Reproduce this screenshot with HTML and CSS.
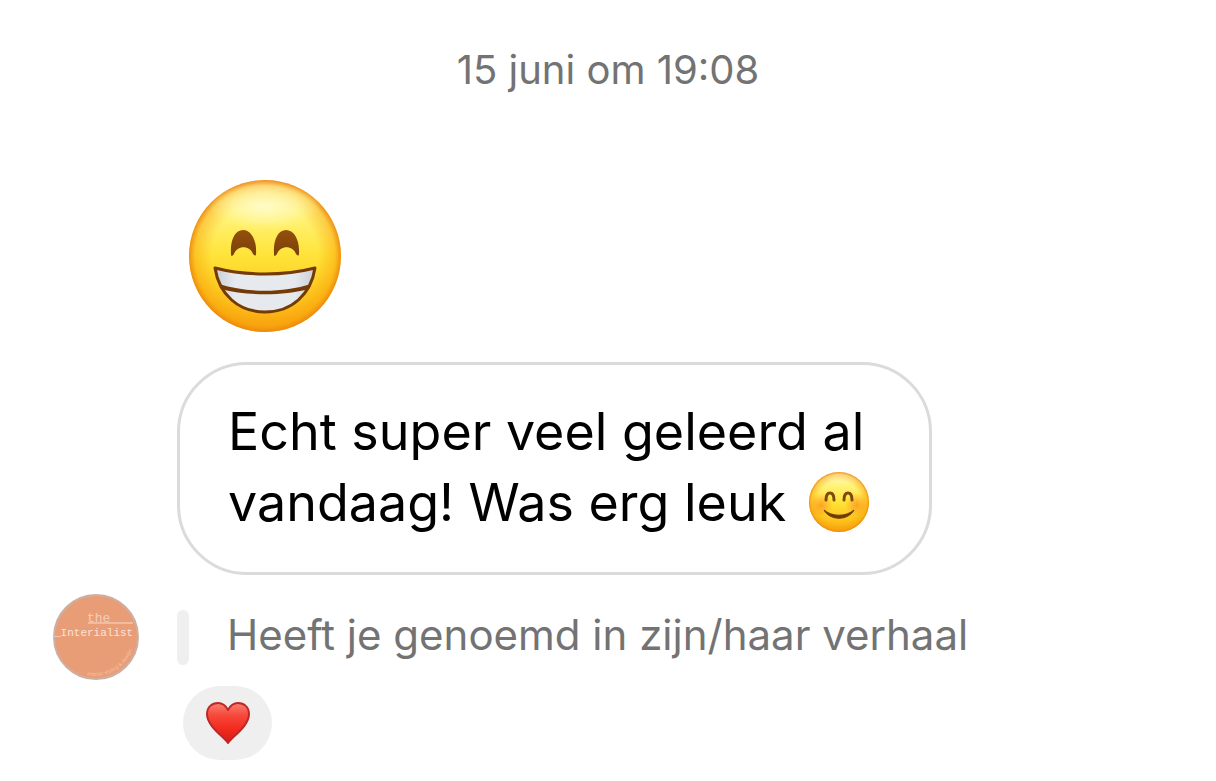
FILE: index.html
```html
<!DOCTYPE html>
<html lang="nl">
<head>
    <meta charset="UTF-8">
    <meta name="viewport" content="width=device-width, initial-scale=1.0">
    <title>Gesprek</title>
    <link rel="stylesheet" href="styles.css">
</head>
<body>
    <main class="chat">
        <time class="date">15 juni om 19:08</time>

        <div class="messages">
            <svg class="big-emoji" viewBox="0 0 152 152" role="img" aria-label="Grijnzend gezicht">
                <defs>
                    <linearGradient id="face" x1="0" y1="0" x2="0" y2="1">
                        <stop offset="0" stop-color="#fffbd0"/>
                        <stop offset="0.22" stop-color="#fff47c"/>
                        <stop offset="0.5" stop-color="#ffe338"/>
                        <stop offset="0.78" stop-color="#fdc61e"/>
                        <stop offset="1" stop-color="#f9a814"/>
                    </linearGradient>
                    <radialGradient id="edge" cx="0.5" cy="0.5" r="0.5">
                        <stop offset="0.7" stop-color="#f79400" stop-opacity="0"/>
                        <stop offset="0.92" stop-color="#f79400" stop-opacity="0.4"/>
                        <stop offset="1" stop-color="#ea8510" stop-opacity="0.9"/>
                    </radialGradient>
                    <radialGradient id="shine">
                        <stop offset="0" stop-color="#fffcd2" stop-opacity="0.9"/>
                        <stop offset="0.6" stop-color="#fff8a8" stop-opacity="0.6"/>
                        <stop offset="1" stop-color="#fff37c" stop-opacity="0"/>
                    </radialGradient>
                    <linearGradient id="teeth" x1="0" y1="0" x2="1" y2="0">
                        <stop offset="0" stop-color="#c9ced6"/>
                        <stop offset="0.2" stop-color="#e6e9ee"/>
                        <stop offset="0.8" stop-color="#e6e9ee"/>
                        <stop offset="1" stop-color="#c9ced6"/>
                    </linearGradient>
                    <linearGradient id="eye" x1="0" y1="0" x2="0" y2="1">
                        <stop offset="0" stop-color="#944f0c"/>
                        <stop offset="1" stop-color="#7a4208"/>
                    </linearGradient>
                </defs>
                <circle cx="76" cy="76" r="76" fill="url(#face)"/>
                <circle cx="76" cy="76" r="76" fill="url(#edge)"/>
                <ellipse cx="76" cy="27" rx="56" ry="24" fill="url(#shine)"/>
                <path d="M42 74C41 60 46 50 54 50S68 60 67 74Q67 77 64 74C61 65 48 65 45 74Q42 78 42 74Z" fill="url(#eye)"/>
                <path d="M85 74C84 60 89 50 97 50S111 60 110 74Q110 77 107 74C104 65 91 65 88 74Q85 78 85 74Z" fill="url(#eye)"/>
                <path d="M26 88C57 96 95 96 126 88C122 114 103 132 76 132S30 114 26 88Z" fill="url(#teeth)" stroke="#753b06" stroke-width="3" stroke-linejoin="round"/>
                <path d="M30 104C58 113 94 113 122 104L120 109C94 116 58 116 32 109Z" fill="#753b06"/>
            </svg>

            <p class="bubble">Echt super veel geleerd al<br>vandaag! Was erg leuk
                <svg class="emoji" viewBox="0 0 60 60" role="img" aria-label="Blozend lachend gezicht">
                    <defs>
                        <radialGradient id="blush">
                            <stop offset="0" stop-color="#fb7a1e" stop-opacity="0.6"/>
                            <stop offset="1" stop-color="#fb7a1e" stop-opacity="0"/>
                        </radialGradient>
                    </defs>
                    <circle cx="30" cy="30" r="30" fill="url(#face)"/>
                    <circle cx="30" cy="30" r="30" fill="url(#edge)"/>
                    <circle cx="12" cy="33" r="12" fill="url(#blush)"/>
                    <circle cx="48" cy="33" r="12" fill="url(#blush)"/>
                    <path d="M17 28C17 22 19 21 21 21S25 23 25 28M35 28C35 22 37 21 39 21S43 23 43 28" fill="none" stroke="#7d480c" stroke-width="3" stroke-linecap="round"/>
                    <path d="M15 38C23 45 37 45 45 38C39 49 21 49 15 38Z" fill="#6e3b08" stroke="#6e3b08" stroke-width="1" stroke-linejoin="round"/>
                </svg>
            </p>
        </div>

        <div class="mention">
            <svg class="avatar" viewBox="0 0 86 86" role="img" aria-label="the Interialist">
                <defs>
                    <path id="rim" d="M34 81A39 39 0 0 0 81 42"/>
                </defs>
                <circle cx="43" cy="43" r="42" fill="#e99d77" stroke="#cdb0a3" stroke-width="2"/>
                <text class="logo-the" x="34" y="28">the</text>
                <path d="M35 29H80" stroke="#f8dccb" stroke-width="1"/>
                <text class="logo-name" x="1" y="42">_Interialist</text>
                <text class="logo-rim"><textPath href="#rim">interior styling &amp; design</textPath></text>
            </svg>
            <span class="bar"></span>
            <p class="mention-text">Heeft je genoemd in zijn/haar verhaal</p>
        </div>

        <button class="reaction" type="button" aria-label="Hartje">
            <svg class="heart" viewBox="0 0 44 42" aria-hidden="true">
                <defs>
                    <linearGradient id="red" x1="0" y1="0" x2="0" y2="1">
                        <stop offset="0" stop-color="#f98070"/>
                        <stop offset="0.3" stop-color="#f64a3c"/>
                        <stop offset="0.65" stop-color="#f22a1e"/>
                        <stop offset="1" stop-color="#d81c16"/>
                    </linearGradient>
                </defs>
                <path d="M22 41C17 34 1 24 1 12C1 5 6 1 12 1C17 1 20 4 22 8C24 4 27 1 32 1C38 1 43 5 43 12C43 24 27 34 22 41Z" fill="url(#red)" stroke="#bd2727" stroke-width="2" stroke-linejoin="round"/>
            </svg>
        </button>
    </main>
</body>
</html>
```
FILE: styles.css
```css
body {
    margin: 0;
    background-color: #fff;
    color: #000;
    font-family: Inter, "Liberation Sans", sans-serif;
}
p {
    margin: 0;
}
.chat {
    display: flex;
    flex-direction: column;
    padding: 45px 0 20px;
}
.date {
    align-self: center;
    font-size: 40px;
    line-height: 50px;
    color: #737373;
}
.messages {
    display: flex;
    flex-direction: column;
    align-items: flex-start;
    gap: 30px;
    margin-top: 85px;
    padding-left: 177px;
}
.big-emoji {
    width: 152px;
    height: 152px;
    margin-left: 12px;
}
.bubble {
    padding: 31px 60px 34px 48px;
    border: 3px solid #dbdbdb;
    border-radius: 70px;
    font-size: 52px;
    line-height: 71px;
}
.emoji {
    width: 60px;
    height: 60px;
    margin: -10px 0 0 8px;
    vertical-align: -11px;
}
.mention {
    display: flex;
    align-items: center;
    margin-top: 19px;
    padding-left: 53px;
}
.avatar {
    flex: none;
    width: 86px;
    height: 86px;
}
.logo-the,
.logo-name {
    fill: #fbe3d5;
    font-family: "Liberation Mono", monospace;
}
.logo-the {
    font-size: 13px;
    fill: #f5cdb7;
}
.logo-name {
    font-size: 11px;
}
.logo-rim {
    font-size: 5px;
    fill: #f3c2a8;
}
.bar {
    flex: none;
    width: 12px;
    height: 55px;
    margin-left: 38px;
    border-radius: 6px;
    background-color: #efefef;
}
.mention-text {
    margin-left: 38px;
    padding-bottom: 5px;
    font-size: 42px;
    line-height: 52px;
    color: #737373;
}
.reaction {
    display: flex;
    align-items: center;
    justify-content: center;
    width: 89px;
    height: 74px;
    margin: 6px 0 0 183px;
    padding: 0;
    border: none;
    border-radius: 37px;
    background-color: #efefef;
    cursor: pointer;
}
.heart {
    width: 44px;
    height: 42px;
}
```
